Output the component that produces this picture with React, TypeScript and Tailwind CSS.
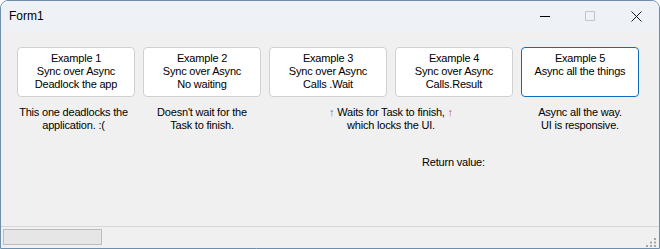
import React from "react";

const examples = [
  { lines: ["Example 1", "Sync over Async", "Deadlock the app"] },
  { lines: ["Example 2", "Sync over Async", "No waiting"] },
  { lines: ["Example 3", "Sync over Async", "Calls .Wait"] },
  { lines: ["Example 4", "Sync over Async", "Calls.Result"] },
  { lines: ["Example 5", "Async all the things"], focused: true },
];

function TitleBar() {
  return (
    <div className="flex h-[30px] items-center bg-[#eef2f7] pl-[8px] text-[12px] tracking-normal">
      <span>Form1</span>
      <div className="ml-auto flex h-full items-center">
        {/* minimize */}
        <div className="flex w-[46px] items-center justify-center pl-[2px]">
          <div className="h-px w-[10px] bg-black" />
        </div>
        {/* maximize (disabled) */}
        <div className="flex w-[46px] items-center justify-center">
          <div className="h-[10px] w-[10px] rounded-[1px] border border-[#c4c4c4]" />
        </div>
        {/* close */}
        <div className="flex w-[46px] items-center justify-center">
          <svg width="11" height="11" viewBox="0 0 11 11">
            <path d="M0.5 0.5L10.5 10.5M10.5 0.5L0.5 10.5" stroke="#1a1a1a" strokeWidth="1" />
          </svg>
        </div>
      </div>
    </div>
  );
}

function SizeGrip() {
  const dots = [
    [8, 0],
    [4, 3.5],
    [8, 3.5],
    [0, 7],
    [4, 7],
    [8, 7],
  ];
  return (
    <svg width="10" height="9" viewBox="0 0 10 9" className="mb-[1px] ml-auto mr-[3px] self-end">
      {dots.map(([x, y], i) => (
        <rect key={i} x={x} y={y} width="2" height="2" fill="#a6a6a6" />
      ))}
    </svg>
  );
}

export default function App() {
  return (
    <div className="flex h-[249px] w-[660px] flex-col overflow-hidden rounded-t-[8px] border border-[#6f8eae] bg-[#f0f0f0] font-['Liberation_Sans',Arial,sans-serif] text-[11px] tracking-[-0.2px] text-black">
      <TitleBar />

      <div className="flex-1 pl-[16px] pt-[16px]">
        <div className="grid grid-cols-[repeat(5,118px)] gap-x-2">
          {examples.map((ex, i) => (
            <button
              key={i}
              className={`flex h-[50px] flex-col items-center rounded-[4px] border bg-white pt-[4px] leading-[13px] ${
                ex.focused ? "border-[#0f6cbd]" : "border-[#d0d0d0]"
              }`}
            >
              {ex.lines.map((l) => (
                <span key={l}>{l}</span>
              ))}
            </button>
          ))}

          <div className="mt-[9px] pr-[5px] text-center leading-[13px]">
            This one deadlocks the
            <br />
            application. :(
          </div>
          <div className="mt-[9px] text-center leading-[13px]">
            Doesn't wait for the
            <br />
            Task to finish.
          </div>
          <div className="col-span-2 mt-[9px] text-center leading-[13px]">
            <span className="text-[#3f7fa6]">↑</span> Waits for Task to finish,{" "}
            <span className="text-[#b25656]">↑</span>
            <br />
            which locks the UI.
          </div>
          <div className="mt-[9px] text-center leading-[13px]">
            Async all the way.
            <br />
            UI is responsive.
          </div>

          <div className="col-start-4 mt-[24px] pl-[27px] leading-[13px]">Return value:</div>
        </div>
      </div>

      <div className="flex h-[22px] border-t border-[#d6d6d6] pl-[2px] pt-[2px]">
        <div className="h-[16px] w-[99px] border border-[#bcbcbc] bg-[#e6e6e6]" />
        <SizeGrip />
      </div>
    </div>
  );
}
